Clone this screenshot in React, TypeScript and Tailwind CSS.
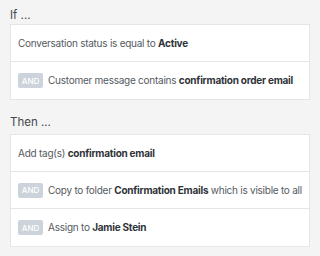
import React from "react";

type Row = { and?: boolean; parts: (string | { b: string })[] };

const ifRows: Row[] = [
  { parts: ["Conversation status is equal to ", { b: "Active" }] },
  { and: true, parts: ["Customer message contains ", { b: "confirmation order email" }] },
];

const thenRows: Row[] = [
  { parts: ["Add tag(s) ", { b: "confirmation email" }] },
  { and: true, parts: ["Copy to folder ", { b: "Confirmation Emails" }, " which is visible to all"] },
  { and: true, parts: ["Assign to ", { b: "Jamie Stein" }] },
];

const RuleCard = ({ rows }: { rows: Row[] }) => (
  <div className="bg-white border border-[#e3e6ea] divide-y divide-[#e3e6ea]">
    {rows.map((row, i) => (
      <div key={i} className="h-[37px] flex items-center px-[7px] gap-[5px] text-[10px] tracking-[-0.25px] text-[#555a60]">
        {row.and && (
          <span className="h-[15px] w-[25px] flex items-center justify-center rounded-[2px] bg-[#cdd3da] text-white text-[8px] tracking-normal font-medium">
            AND
          </span>
        )}
        <span className="whitespace-nowrap">
          {row.parts.map((p, j) =>
            typeof p === "string" ? (
              <React.Fragment key={j}>{p}</React.Fragment>
            ) : (
              <b key={j} className="font-bold text-[#2f3338]">{p.b}</b>
            )
          )}
        </span>
      </div>
    ))}
  </div>
);

export default function App() {
  return (
    <div className="w-[320px] h-[256px] bg-[#f4f4f4] px-[10px] pt-[8px] font-['Inter',sans-serif]">
      <div className="text-[11.5px] text-[#44484d] leading-[14px] mb-[2px]">If ...</div>
      <RuleCard rows={ifRows} />
      <div className="text-[11.5px] text-[#44484d] leading-[14px] mt-[15px] mb-[5px]">Then ...</div>
      <RuleCard rows={thenRows} />
    </div>
  );
}
